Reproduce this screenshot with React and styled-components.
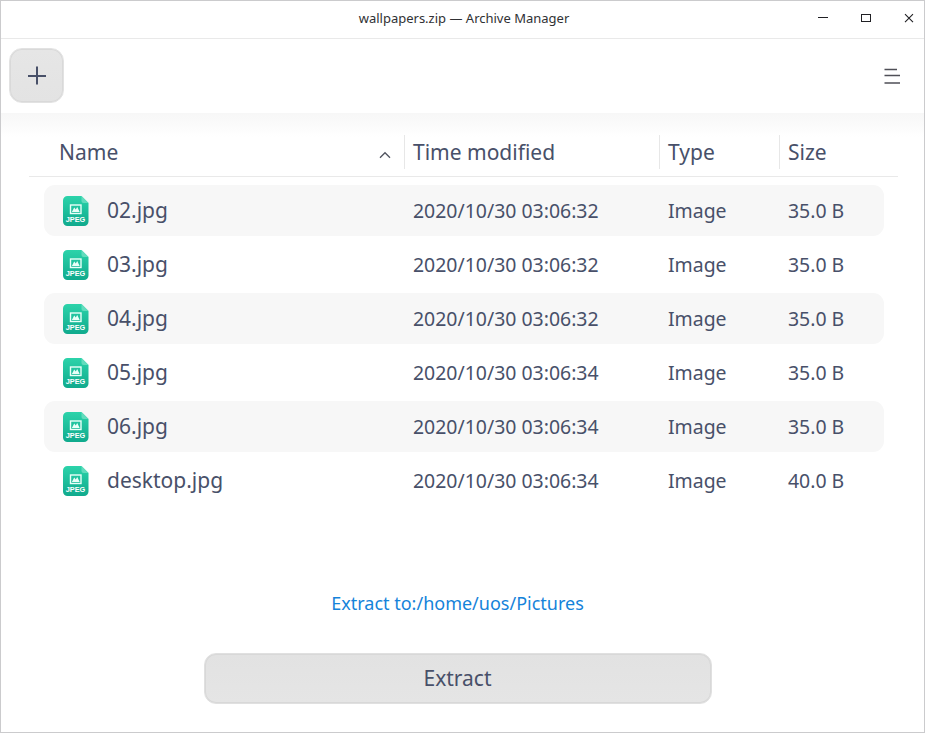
import React from "react";
import styled, { createGlobalStyle } from "styled-components";

const GlobalStyle = createGlobalStyle`
  * { box-sizing: border-box; }
  body { margin: 0; background: #fff; }
  button { font: inherit; color: inherit; padding: 0; border: 0; background: none; }
`;

const Window = styled.div`
  width: 925px;
  height: 733px;
  display: flex;
  flex-direction: column;
  border: 1px solid #cbcbcd;
  background: #fff;
  color: #485069;
  font-family: "Noto Sans", sans-serif;
  overflow: hidden;
`;

const TitleBar = styled.header`
  flex: none;
  height: 38px;
  display: grid;
  grid-template-columns: 1fr auto 1fr;
  align-items: center;
  border-bottom: 1px solid #e9e9e9;
`;

const Title = styled.h1`
  grid-column: 2;
  margin: 0 0 3px 3px;
  font-size: 13px;
  font-weight: 400;
  line-height: 18px;
  color: #303134;
`;

const WindowControls = styled.div`
  display: flex;
  justify-content: flex-end;
  height: 34px;
  margin-bottom: 3px;
`;

const WindowButton = styled.button`
  width: ${(p) => p.$width || 43}px;
  height: 34px;
  color: #202024;
  svg { display: block; }
`;

const Toolbar = styled.div`
  flex: none;
  height: 74px;
  display: flex;
  justify-content: space-between;
  align-items: center;
  padding: 0 16px 0 8px;
`;

const AddButton = styled.button`
  width: 55px;
  height: 55px;
  margin-bottom: 1px;
  display: grid;
  place-items: center;
  border: 1px solid #e2e2e2;
  border-radius: 13px;
  box-shadow: inset 0 0 0 1px #d9d9d9;
  background: linear-gradient(#e6e6e6, #e3e3e3);
  color: #485068;
  svg { display: block; }
`;

const MenuButton = styled.button`
  width: 32px;
  height: 32px;
  color: #4f4f57;
  svg { display: block; }
`;

const Content = styled.main`
  flex: 1;
  display: flex;
  flex-direction: column;
  background: linear-gradient(#f7f7f7, #fff 24px);
`;

const columns = "360px 255px 120px 1fr";

const HeaderRow = styled.div`
  height: 64px;
  margin: 0 26px 0 28px;
  padding: 22px 0 7px 15px;
  display: grid;
  grid-template-columns: ${columns};
  border-bottom: 1px solid #e9e9e9;
`;

const HeaderCell = styled.div`
  display: flex;
  justify-content: space-between;
  align-items: center;
  padding: 0 12px 0 ${(p) => (p.$first ? 15 : 8)}px;
  border-left: ${(p) => (p.$first ? "0" : "1px solid #e7e7e7")};
  font-size: 21px;
  line-height: 28px;
`;

const SortArrow = styled.svg`
  margin-top: 3px;
`;

const FileList = styled.div`
  display: flex;
  flex-direction: column;
  gap: 3px;
  margin: 8px 40px 0 43px;
`;

const FileRow = styled.div`
  height: 51px;
  display: grid;
  grid-template-columns: ${columns};
  align-items: center;
  border-radius: 11px;
  background: ${(p) => (p.$shaded ? "#f7f7f7" : "transparent")};
`;

const FileName = styled.div`
  display: flex;
  align-items: center;
  gap: 17px;
  padding-left: 18px;
`;

const FileLabel = styled.span`
  font-size: 21px;
  line-height: 28px;
  margin-bottom: 1px;
`;

const Detail = styled.div`
  padding-left: 9px;
  font-size: 19.450px;
  line-height: 28px;
`;

const Footer = styled.footer`
  margin-top: auto;
  padding: 0 10px 28px 0;
  display: flex;
  flex-direction: column;
  align-items: center;
  gap: 38px;
`;

const Destination = styled.a`
  font-size: 18px;
  line-height: 24px;
  color: #1583da;
`;

const ExtractButton = styled.button`
  width: 508px;
  height: 51px;
  padding-bottom: 1px;
  border: 1px solid #e0e0e0;
  border-radius: 12px;
  box-shadow: inset 0 0 0 1px #d8d8d8;
  background: linear-gradient(#e2e2e2, #e5e5e5);
  font-size: 21px;
  line-height: 28px;
`;

const FileIcon = styled.svg`
  display: block;
  flex: none;
`;

function JpegIcon() {
  return (
    <FileIcon width="28" height="32" viewBox="0 0 28 32">
      <defs>
        <linearGradient id="jpegBody" x1="0" y1="0" x2="0" y2="1">
          <stop offset="0" stopColor="#2cd3aa" />
          <stop offset="1" stopColor="#10aa8d" />
        </linearGradient>
      </defs>
      <path d="M5.500 1H19.500L26.500 8V26.500a4.500 4.500 0 0 1-4.500 4.500H5.500a4.500 4.500 0 0 1-4.500-4.500V5.500a4.500 4.500 0 0 1 4.500-4.500Z" fill="url(#jpegBody)" />
      <path d="M19.500 1L26.500 8H21.500a2 2 0 0 1-2-2Z" fill="#62dcbd" />
      <rect x="8.500" y="10" width="10.500" height="8.500" fill="none" stroke="#e9fff8" strokeWidth="1.400" />
      <path d="M9.900 17L12.200 12.500L13.800 14.400L15.200 12L17.700 17Z" fill="#e9fff8" />
      <text x="13.500" y="27" textAnchor="middle" fontFamily="Liberation Sans, sans-serif" fontSize="8" fontWeight="700" fill="#fff" textLength="19.500" lengthAdjust="spacingAndGlyphs">
        JPEG
      </text>
    </FileIcon>
  );
}

const files = [
  { name: "02.jpg", time: "2020/10/30 03:06:32", type: "Image", size: "35.0 B" },
  { name: "03.jpg", time: "2020/10/30 03:06:32", type: "Image", size: "35.0 B" },
  { name: "04.jpg", time: "2020/10/30 03:06:32", type: "Image", size: "35.0 B" },
  { name: "05.jpg", time: "2020/10/30 03:06:34", type: "Image", size: "35.0 B" },
  { name: "06.jpg", time: "2020/10/30 03:06:34", type: "Image", size: "35.0 B" },
  { name: "desktop.jpg", time: "2020/10/30 03:06:34", type: "Image", size: "40.0 B" },
];

export default function App() {
  return (
    <>
      <GlobalStyle />
      <Window>
        <TitleBar>
          <span />
          <Title>wallpapers.zip — Archive Manager</Title>
          <WindowControls>
            <WindowButton aria-label="Minimize">
              <svg width="43" height="34"><path d="M16 16.500h10" stroke="currentColor" /></svg>
            </WindowButton>
            <WindowButton aria-label="Maximize">
              <svg width="43" height="34"><rect x="16.500" y="13.500" width="9" height="7" fill="none" stroke="currentColor" /></svg>
            </WindowButton>
            <WindowButton aria-label="Close" $width={36}>
              <svg width="36" height="34"><path d="M17 13.200l8 8M25 13.200l-8 8" stroke="currentColor" strokeWidth="1.100" /></svg>
            </WindowButton>
          </WindowControls>
        </TitleBar>
        <Toolbar>
          <AddButton aria-label="Add files">
            <svg width="19" height="19"><path d="M10 0.500v18M1 10h18" stroke="currentColor" strokeWidth="2" /></svg>
          </AddButton>
          <MenuButton aria-label="Menu">
            <svg width="32" height="32"><path d="M8.500 9.500h12.500M8.500 15.500h15.500M8.500 23h15.500" stroke="currentColor" strokeWidth="1.400" /></svg>
          </MenuButton>
        </Toolbar>
        <Content>
          <HeaderRow>
            <HeaderCell $first>
              Name
              <SortArrow width="14" height="10"><path d="M2 8.700l5-5L12 8.700" fill="none" stroke="#50535f" strokeWidth="1.300" /></SortArrow>
            </HeaderCell>
            <HeaderCell>Time modified</HeaderCell>
            <HeaderCell>Type</HeaderCell>
            <HeaderCell>Size</HeaderCell>
          </HeaderRow>
          <FileList>
            {files.map((file, i) => (
              <FileRow key={file.name} $shaded={i % 2 === 0}>
                <FileName>
                  <JpegIcon />
                  <FileLabel>{file.name}</FileLabel>
                </FileName>
                <Detail>{file.time}</Detail>
                <Detail>{file.type}</Detail>
                <Detail>{file.size}</Detail>
              </FileRow>
            ))}
          </FileList>
          <Footer>
            <Destination>Extract to:/home/uos/Pictures</Destination>
            <ExtractButton>Extract</ExtractButton>
          </Footer>
        </Content>
      </Window>
    </>
  );
}
